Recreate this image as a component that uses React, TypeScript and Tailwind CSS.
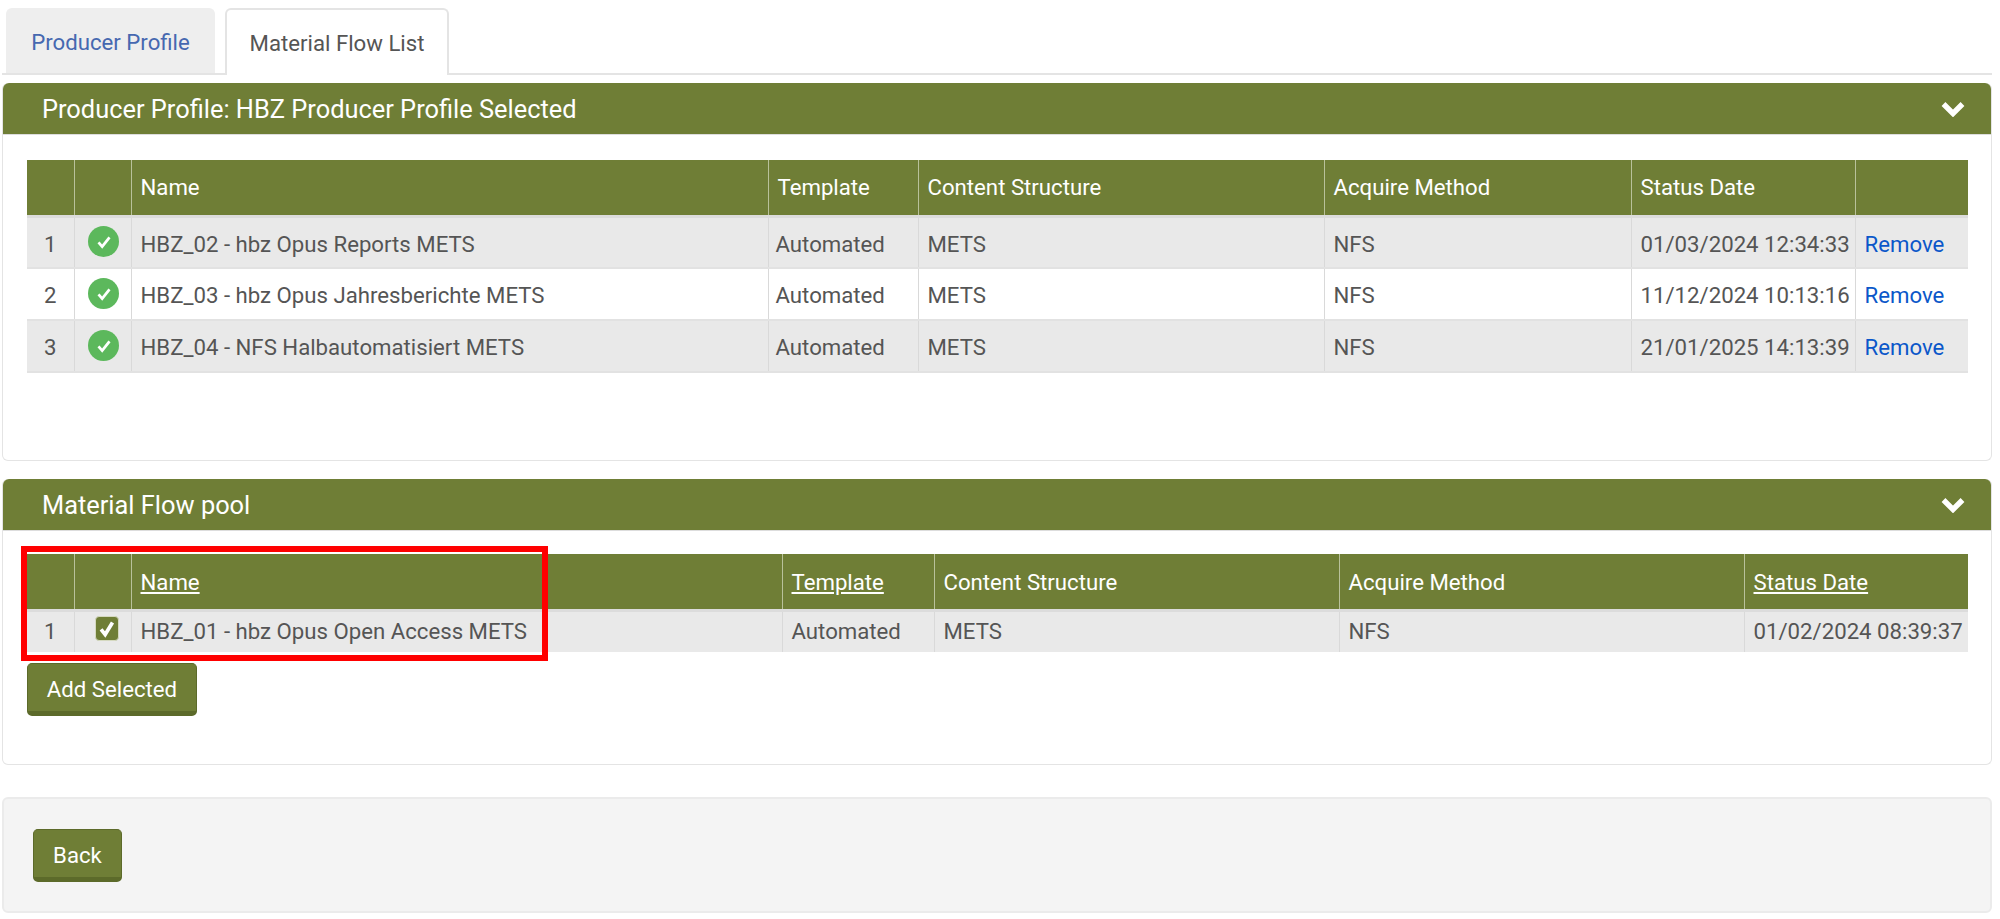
const font = "font-['Roboto',sans-serif]";

type Col = { label: string; width: string; sort?: boolean };

const profileCols: Col[] = [
  { label: "", width: "w-[47px]" },
  { label: "", width: "w-[57px]" },
  { label: "Name", width: "w-[637px]" },
  { label: "Template", width: "w-[150px]" },
  { label: "Content Structure", width: "w-[406px]" },
  { label: "Acquire Method", width: "w-[307px]" },
  { label: "Status Date", width: "w-[224px]" },
  { label: "", width: "w-[113px]" },
];

const poolCols: Col[] = [
  { label: "", width: "w-[47px]" },
  { label: "", width: "w-[57px]" },
  { label: "Name", width: "w-[651px]", sort: true },
  { label: "Template", width: "w-[152px]", sort: true },
  { label: "Content Structure", width: "w-[405px]" },
  { label: "Acquire Method", width: "w-[405px]" },
  { label: "Status Date", width: "w-[224px]", sort: true },
];

const profileRows = [
  ["1", "HBZ_02 - hbz Opus Reports METS", "Automated", "METS", "NFS", "01/03/2024 12:34:33"],
  ["2", "HBZ_03 - hbz Opus Jahresberichte METS", "Automated", "METS", "NFS", "11/12/2024 10:13:16"],
  ["3", "HBZ_04 - NFS Halbautomatisiert METS", "Automated", "METS", "NFS", "21/01/2025 14:13:39"],
];

function TableHead({ cols, pad }: { cols: Col[]; pad?: string }) {
  return (
    <thead>
      <tr className="bg-[#6f7e36] text-white">
        {cols.map((col, i) => (
          <th
            key={i}
            className={`${col.width} ${pad ?? ""} h-[56px] px-[9px] text-left font-normal border-b-[3px] border-b-[#dcdcdc] border-r border-r-[#b9c19a] last:border-r-0`}
          >
            {col.sort ? <span className="underline underline-offset-2">{col.label}</span> : col.label}
          </th>
        ))}
      </tr>
    </thead>
  );
}

function Panel({ title, height, children }: { title: string; height: string; children: React.ReactNode }) {
  return (
    <section className={`${height} ml-[2px] w-[1990px] rounded-[6px] border border-[#e4e4e4] border-t-0 bg-white`}>
      <header className="flex h-[52px] items-center justify-between rounded-t-[6px] border-b border-b-[#dddddd] bg-[#6f7e36] pl-[39px] pr-[26px] text-[25.4px] text-white">
        <h2 className="pt-[2px] font-normal">{title}</h2>
        <svg viewBox="0 0 24 16" className="h-[16px] w-[24px]" fill="none" stroke="white" strokeWidth="5.4">
          <path d="M2.5 3l9.5 9.5L21.500 3" />
        </svg>
      </header>
      {children}
    </section>
  );
}

function ProfileTable() {
  return (
    <table className="ml-[24px] mt-[25px] w-[1941px] table-fixed border-collapse text-[#555555]">
      <TableHead cols={profileCols} />
      <tbody>
        {profileRows.map((row, i) => (
          <tr key={row[0]} className={`border-b-2 border-b-[#e2e2e2] ${i % 2 === 0 ? "bg-[#e9e9e9]" : "bg-white"}`}>
            <td className="h-[52px] border-r border-r-[#d9d9d9] pl-[17px] pt-[4px]">{row[0]}</td>
            <td className="border-r border-r-[#d9d9d9]">
              <div className="mx-auto mb-[1px] flex h-[31px] w-[31px] translate-x-[1px] items-center justify-center rounded-full bg-[#5cb85c]">
                <svg viewBox="0 0 24 24" className="h-[22px] w-[22px]" fill="none" stroke="white" strokeWidth="3">
                  <path d="M6 12.500l4 4.500 8-10" />
                </svg>
              </div>
            </td>
            <td className="border-r border-r-[#d9d9d9] px-[9px] pt-[4px]">{row[1]}</td>
            <td className="border-r border-r-[#d9d9d9] pl-[7px] pt-[4px]">{row[2]}</td>
            <td className="border-r border-r-[#d9d9d9] px-[9px] pt-[4px]">{row[3]}</td>
            <td className="border-r border-r-[#d9d9d9] px-[9px] pt-[4px]">{row[4]}</td>
            <td className="whitespace-nowrap border-r border-r-[#d9d9d9] px-[9px] pt-[4px]">{row[5]}</td>
            <td className="px-[9px] pt-[4px] text-[#0b57c9]">Remove</td>
          </tr>
        ))}
      </tbody>
    </table>
  );
}

function PoolTable() {
  return (
    <table className="ml-[24px] mt-[23px] w-[1941px] table-fixed border-collapse text-[#555555]">
      <TableHead cols={poolCols} pad="pt-[2px]" />
      <tbody>
        <tr className="bg-[#e9e9e9]">
          <td className="h-[42px] border-r border-r-[#d9d9d9] pl-[17px]">1</td>
          <td className="border-r border-r-[#d9d9d9]">
            <div className="mb-[6px] ml-[20px] flex h-[25px] w-[24px] items-center justify-center rounded-[4px] border border-[#d5d9c0] bg-[#6f7e36]">
              <svg viewBox="0 0 24 24" className="h-[22px] w-[22px]" fill="none" stroke="white" strokeWidth="4">
                <path d="M5.500 12.500l4.500 5.500 8-13" />
              </svg>
            </div>
          </td>
          <td className="border-r border-r-[#d9d9d9] px-[9px]">HBZ_01 - hbz Opus Open Access METS</td>
          <td className="border-r border-r-[#d9d9d9] px-[9px]">Automated</td>
          <td className="border-r border-r-[#d9d9d9] px-[9px]">METS</td>
          <td className="border-r border-r-[#d9d9d9] px-[9px]">NFS</td>
          <td className="whitespace-nowrap px-[9px]">01/02/2024 08:39:37</td>
        </tr>
      </tbody>
    </table>
  );
}

function Button({ label, width }: { label: string; width: string }) {
  return (
    <button className={`${width} h-[53px] rounded-[5px] border border-[#5c6a2a] border-b-[5px] bg-[#6f7e36] pt-[5px] text-white`}>
      {label}
    </button>
  );
}

export default function App() {
  return (
    <div className={`${font} relative h-[919px] w-[2000px] overflow-hidden bg-white text-[22.2px]`}>
      <nav className="ml-[2px] flex h-[75px] w-[1990px] items-end gap-[10px] border-b-2 border-b-[#e4e4e4] pl-[4px] pt-[9px]">
        <div className="flex h-[65px] w-[209px] items-center justify-center rounded-t-[6px] bg-[#eeeeee] pt-[4px] text-[#4668b0]">
          Producer Profile
        </div>
        <div className="-mb-[2px] flex h-[67px] w-[224px] items-center justify-center rounded-t-[6px] border-2 border-b-0 border-[#e4e4e4] bg-white pt-[2px] text-[#555555]">
          Material Flow List
        </div>
      </nav>
      <div className="mt-[8px]">
        <Panel title="Producer Profile: HBZ Producer Profile Selected" height="h-[378px]">
          <ProfileTable />
        </Panel>
      </div>
      <div className="mt-[18px]">
        <Panel title="Material Flow pool" height="h-[286px]">
          <PoolTable />
          <div className="pl-[24px] pt-[11px]">
            <Button label="Add Selected" width="w-[170px]" />
          </div>
        </Panel>
      </div>
      <footer className="ml-[2px] mt-[32px] h-[116px] w-[1990px] rounded-[6px] border-2 border-[#ebebeb] bg-[#f4f4f4] pl-[29px] pt-[30px]">
        <Button label="Back" width="w-[89px]" />
      </footer>
      {/* red annotation over the pool table */}
      <div className="absolute left-[21px] top-[546px] h-[115px] w-[527px] border-[6px] border-[#ff0000]" />
    </div>
  );
}
